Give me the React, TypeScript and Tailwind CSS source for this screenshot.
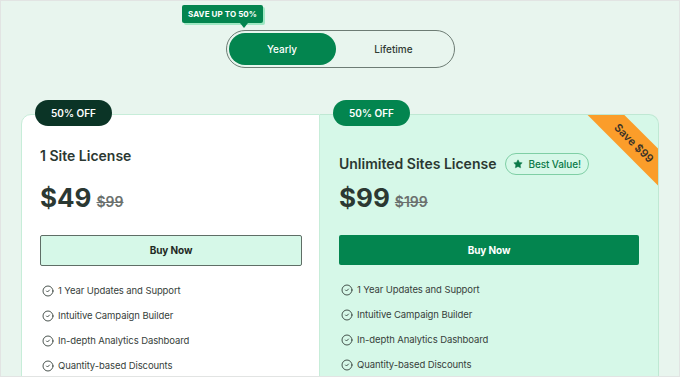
import { CircleCheck, Star } from "lucide-react";

const features = [
  "1 Year Updates and Support",
  "Intuitive Campaign Builder",
  "In-depth Analytics Dashboard",
  "Quantity-based Discounts",
];

const FeatureList = () => (
  <ul className="mt-[18px] flex flex-col gap-[11px]">
    {features.map((f) => (
      <li key={f} className="flex items-center gap-[4px] text-[9.5px] tracking-[-0.01em] leading-[14px] text-[#36413b]">
        <CircleCheck size={12} strokeWidth={1.7} className="text-[#2b3630] ml-[2px]" />
        <span>{f}</span>
      </li>
    ))}
  </ul>
);

const App = () => {
  return (
    <div className="w-[680px] h-[377px] overflow-hidden border border-[#e2e4e3] bg-[#e8f5ee] font-[Inter,sans-serif] text-[#2b3832]">
      <div className="relative pt-[29px]">
        <div className="absolute left-[181px] top-[4px] bg-[#03854f] text-white text-[8px] font-bold tracking-[0.01em] px-[6px] h-[18px] flex items-center rounded-[2px] shadow-[2px_2px_0_#9fe8c3]">
          SAVE UP TO 50%
          <span className="absolute left-[58px] top-[18px] w-0 h-0 border-l-[4px] border-r-[4px] border-t-[5px] border-l-transparent border-r-transparent border-t-[#03854f]" />
        </div>
        <div className="mx-auto w-[229px] h-[38px] rounded-full border border-[#6d7c74] p-[2px] flex items-center">
          <div className="w-[107px] h-[32px] rounded-full bg-[#03854f] text-white text-[10px] font-medium flex items-center justify-center">
            Yearly
          </div>
          <div className="flex-1 text-center text-[10px] font-medium text-[#2f3a34]">Lifetime</div>
        </div>
      </div>

      <div className="flex mt-[46px] ml-[20px]">
        <div className="relative w-[299px] h-[300px] bg-white border border-[#c7edd9] rounded-tl-[10px] px-[18px]">
          <div className="absolute -top-[15px] left-[13px] w-[77px] h-[26px] rounded-full bg-[#0b3426] text-white text-[10px] font-semibold flex items-center justify-center">
            50% OFF
          </div>
          <h2 className="mt-[32px] text-[14px] leading-[18px] font-semibold">1 Site License</h2>
          <div className="mt-[18px] h-[30px] flex items-baseline gap-[5px]">
            <span className="text-[26px] leading-[30px] font-bold">$49</span>
            <span className="text-[14px] font-semibold text-[#6b716e] line-through">$99</span>
          </div>
          <button className="mt-[22px] w-[262px] h-[31px] rounded-[2px] bg-[#d6f8e8] border border-[#5f6e66] text-[10px] tracking-[-0.01em] font-bold text-[#1f2a24]">
            Buy Now
          </button>
          <FeatureList />
        </div>

        <div className="relative w-[339px] h-[300px] bg-[#d6f8e8] border border-[#bfe8d3] border-l-0 rounded-tr-[10px] px-[19px]">
          <div className="absolute -top-[15px] left-[13px] w-[77px] h-[26px] rounded-full bg-[#03854f] text-white text-[10px] font-semibold flex items-center justify-center">
            50% OFF
          </div>
          <div className="absolute inset-0 overflow-hidden rounded-tr-[10px] pointer-events-none">
            <div className="absolute right-[-46px] top-[15px] w-[140px] h-[26px] rotate-45 bg-[#fb9d2a] text-[#3a3328] text-[11px] font-semibold flex items-center justify-center">
              Save $99
            </div>
          </div>
          <div className="mt-[38px] flex items-center gap-[9px]">
            <h2 className="text-[14px] leading-[18px] font-semibold">Unlimited Sites License</h2>
            <div className="h-[22px] px-[7px] rounded-full border border-[#7fcfa5] flex items-center gap-[5px] text-[10px] tracking-[-0.01em] font-medium text-[#0b7a49]">
              <Star size={10} fill="#0b7a49" strokeWidth={1} />
              Best Value!
            </div>
          </div>
          <div className="mt-[8px] h-[30px] flex items-baseline gap-[5px]">
            <span className="text-[26px] leading-[30px] font-bold">$99</span>
            <span className="text-[14px] font-semibold text-[#6b716e] line-through">$199</span>
          </div>
          <button className="mt-[22px] w-[300px] h-[30px] rounded-[2px] bg-[#03854f] text-[10px] tracking-[-0.01em] font-bold text-white">
            Buy Now
          </button>
          <FeatureList />
        </div>
      </div>
    </div>
  );
};

export default App;
